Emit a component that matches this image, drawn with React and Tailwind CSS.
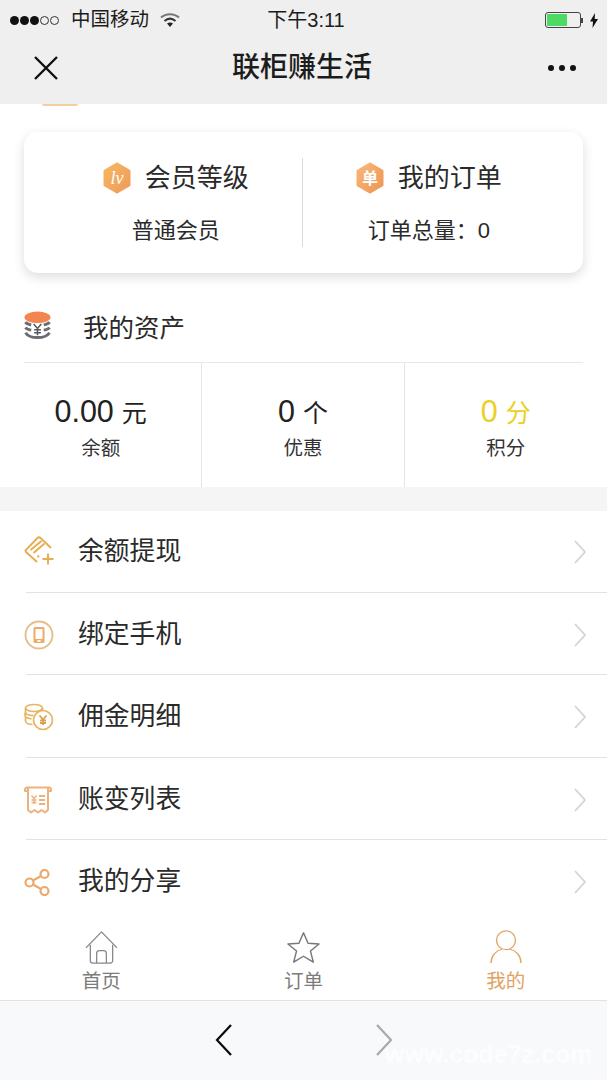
import React from "react";

const FONT = "font-['Liberation_Sans','Noto_Sans_CJK_SC',sans-serif]";

const HexIcon = ({ id, from, to, label, italic = false }) => (
  <svg width="28" height="32" viewBox="1 0 28 32" className="shrink-0">
    <defs>
      <linearGradient id={id} x1="0" y1="0" x2="1" y2="1">
        <stop offset="0" stopColor={from} />
        <stop offset="1" stopColor={to} />
      </linearGradient>
    </defs>
    <polygon
      points="15,2 27,9 27,23 15,30 3,23 3,9"
      fill={`url(#${id})`}
      stroke={`url(#${id})`}
      strokeWidth="3"
      strokeLinejoin="round"
    />
    <text
      x="15"
      y={italic ? 22 : 21.5}
      textAnchor="middle"
      fontSize={italic ? 18 : 16}
      fontStyle={italic ? "italic" : "normal"}
      fontWeight={italic ? "normal" : "bold"}
      fontFamily="'Liberation Serif','Noto Sans CJK SC',serif"
      fill="#fff"
    >
      {label}
    </text>
  </svg>
);

const CoinsIcon = () => (
  <svg width="27" height="29" viewBox="0 0 28 30" className="shrink-0">
    <g fill="none" stroke="#6a6d72" strokeWidth="3">
      <path d="M1.500 11.500c1 1.500 3 2.300 6 2.800" />
      <path d="M26.500 11.500c-1 1.500-3 2.300-6 2.800" />
      <path d="M1.500 17c1 1.500 3 2.300 6 2.800" />
      <path d="M26.500 17c-1 1.500-3 2.300-6 2.800" />
      <path d="M1.500 22.500c2 3 7 5 12.500 5s10.500-2 12.500-5" />
    </g>
    <ellipse cx="14" cy="6.500" rx="13.500" ry="6" fill="#f28550" />
    <path
      d="M10 13.500l4 4.500 4-4.500M14 18v7M10.500 19.500h7M10.500 22.500h7"
      fill="none"
      stroke="#55585c"
      strokeWidth="1.600"
    />
  </svg>
);

const CardPlusIcon = () => (
  <svg width="32" height="32" viewBox="0 0 32 32" fill="none" stroke="#e9ab4f" strokeWidth="1.900" strokeLinejoin="round">
    <path d="M13 26L2 16a1.500 1.500 0 0 1 0-2.200L13.500 2a2 2 0 0 1 3 0L27 12" />
    <path d="M6.500 14L17.500 5M9.500 17l11-9.500" />
    <path d="M13.500 19.500l1.500 1.500" />
    <path d="M24 17.500v11M18.500 23h11" />
  </svg>
);

const PhoneIcon = () => (
  <svg width="30" height="30" viewBox="0 0 30 30" fill="none">
    <circle cx="15" cy="15" r="13.500" stroke="#e8bc84" strokeWidth="1.800" />
    <rect x="9.500" y="7" width="11" height="16" rx="1.500" fill="#eeaa66" />
    <rect x="11.500" y="9" width="7" height="10" fill="#fff" />
    <rect x="13.500" y="20" width="3" height="2" fill="#fff" />
  </svg>
);

const CommissionIcon = () => (
  <svg width="30" height="28" viewBox="0 0 30 28" fill="none" stroke="#e9b45f" strokeWidth="1.700">
    <ellipse cx="10" cy="5" rx="8.500" ry="3.500" />
    <path d="M1.500 5v4c0 2 3 3.500 8 3.500M1.500 9.500c-1 1.500-.500 3 0 4 1 1.500 3 2 6 2.500M1.500 14v4c0 2 3 3.500 7 3.500" />
    <path d="M18.500 5v3" />
    <circle cx="19" cy="17" r="9.500" />
    <path d="M15.500 12.500l3.500 4 3.500-4M19 16.500V22M16 17.500h6M16 20h6" strokeWidth="1.800" stroke="#d9a24c" />
  </svg>
);

const BillIcon = () => (
  <svg width="28" height="28" viewBox="0 0 28 28" fill="none" stroke="#eeb17c" strokeWidth="2" strokeLinejoin="round">
    <path d="M3 1.500h22a2 2 0 0 1 2 2V5h-3" />
    <path d="M3 1.500a2 2 0 0 0-2 2V5h3" />
    <path d="M4 1.500V24l3 2.500 3.500-2.500 3.500 2.500 3.500-2.500 3.500 2.500 3-2.500V1.500" />
    <path d="M7.500 9.500L10 12.500l2.500-3M10 12.500V18M7.500 14h5M7.500 16.500h5" strokeWidth="1.400" />
    <path d="M15 10h6M15 14h6M15 18h6" />
  </svg>
);

const ShareIcon = () => (
  <svg width="26" height="27" viewBox="0 0 26 27" fill="none" stroke="#eba96c" strokeWidth="2.200">
    <circle cx="5.500" cy="13.500" r="4" />
    <circle cx="20.500" cy="5" r="4" />
    <circle cx="20.500" cy="22" r="4" />
    <path d="M9 11.500l8-4.500M9 15.500l8 4.500" />
  </svg>
);

const HomeIcon = () => (
  <svg width="33" height="33" viewBox="0 0 34 36" preserveAspectRatio="none" fill="none" stroke="#85878a" strokeWidth="1.300" strokeLinejoin="round">
    <path d="M1 18.500L17 1l16 17.500" />
    <path d="M5.500 15v17.500a2.500 2.500 0 0 0 2.500 2.500h18a2.500 2.500 0 0 0 2.500-2.500V15" />
    <path d="M12 35V24.500a3 3 0 0 1 3-3h4a3 3 0 0 1 3 3V35" />
  </svg>
);

const StarIcon = () => (
  <svg width="33" height="33" viewBox="0 0 34 36" preserveAspectRatio="none" fill="none" stroke="#76787b" strokeWidth="1.500" strokeLinejoin="round">
    <path d="M17 2l4.700 11.300L33 14.200l-8.800 7.700 2.900 12.100L17 27.500 6.900 34l2.900-12.100L1 14.200l11.300-.9z" />
  </svg>
);

const UserIcon = () => (
  <svg width="32" height="34" viewBox="0 0 32 38" preserveAspectRatio="none" fill="none" stroke="#e3a567" strokeWidth="1.400">
    <ellipse cx="16" cy="11.500" rx="9.500" ry="10.500" />
    <path d="M1 37c0-8 5-14 11-15.500M31 37c0-8-5-14-11-15.500" />
  </svg>
);

const RowChevron = () => (
  <svg width="14" height="24" viewBox="0 0 14 24" fill="none" stroke="#d4d4d4" strokeWidth="1.800" className="shrink-0">
    <path d="M2 1l10 11L2 23" />
  </svg>
);

const menuItems = [
  { label: "余额提现", icon: <CardPlusIcon /> },
  { label: "绑定手机", icon: <PhoneIcon /> },
  { label: "佣金明细", icon: <CommissionIcon /> },
  { label: "账变列表", icon: <BillIcon /> },
  { label: "我的分享", icon: <ShareIcon /> },
];

const StatusBar = () => (
  <div className="flex h-[40px] items-center justify-between pl-[10px] pr-[9px] text-[#1c1c1c]">
    <div className="flex w-[200px] items-center">
      <div className="flex items-center gap-[1px]">
        {[0, 1, 2].map((i) => (
          <span key={i} className="h-[9px] w-[9px] rounded-full bg-[#111]" />
        ))}
        {[3, 4].map((i) => (
          <span key={i} className="h-[9px] w-[9px] rounded-full border border-[#333]" />
        ))}
      </div>
      <span className="ml-[12px] text-[19.500px] leading-none">中国移动</span>
      <svg width="20" height="16" viewBox="0 0 20 16" className="ml-[11px]">
        <path d="M1 5.500C6 1 14 1 19 5.500" fill="none" stroke="#777" strokeWidth="2" />
        <path d="M4.500 9C8 6 12 6 15.500 9" fill="none" stroke="#333" strokeWidth="2" />
        <path d="M7 11.500c2-1.300 4-1.300 6 0L10 15z" fill="#222" />
      </svg>
    </div>
    <span className="ml-[4px] text-[20px] leading-none">下午3:11</span>
    <div className="flex w-[200px] items-center justify-end gap-[7px]">
      <div className="flex items-center">
        <div className="h-[16px] w-[36px] rounded-[3px] border border-[#444] p-[1px]">
          <div className="h-full w-[20px] rounded-[1px] bg-[#4cd964]" />
        </div>
        <span className="h-[5px] w-[2px] bg-[#444]" />
      </div>
      <svg width="8" height="15" viewBox="0 0 8 15">
        <path d="M5 0L0 8.500h3L2.500 15 8 6H4.700z" fill="#111" />
      </svg>
    </div>
  </div>
);

const NavBar = () => (
  <div className="flex h-[64px] items-center justify-between pb-[8px] pl-[33px] pr-[31px]">
    <svg width="26" height="26" viewBox="0 0 26 26" stroke="#111" strokeWidth="2.400">
      <path d="M2 2l22 22M24 2L2 24" />
    </svg>
    <span className="ml-[-3px] text-[28px] font-medium leading-none text-[#1c1c1c]">联柜赚生活</span>
    <div className="flex gap-[5px]">
      <span className="h-[6px] w-[6px] rounded-full bg-[#111]" />
      <span className="h-[6px] w-[6px] rounded-full bg-[#111]" />
      <span className="h-[6px] w-[6px] rounded-full bg-[#111]" />
    </div>
  </div>
);

const SummaryCard = () => (
  <div className="mx-[24px] mt-[28px] h-[141px] rounded-[14px] bg-white py-[26px] pl-[24px] pr-[28px] shadow-[0_4px_12px_rgba(0,0,0,0.14)]">
    <div className="grid h-full grid-cols-2">
      <div className="flex flex-col items-center pl-[2px]">
        <div className="flex h-[40px] items-center gap-[14px] text-[26px] leading-none text-[#2a2a2a]">
          <HexIcon id="hexLv" from="#f5b85f" to="#ef9a5d" label="lv" italic />
          会员等级
        </div>
        <div className="mt-[18px] text-[22px] leading-[30px] text-[#2a2a2a]">普通会员</div>
      </div>
      <div className="flex flex-col items-center border-l border-[#dcdcdc]">
        <div className="flex h-[40px] items-center gap-[14px] text-[26px] leading-none text-[#2a2a2a]">
          <HexIcon id="hexOrder" from="#f8b878" to="#ef9455" label="单" />
          我的订单
        </div>
        <div className="mt-[18px] text-[22px] leading-[30px] text-[#2a2a2a]">订单总量：0</div>
      </div>
    </div>
  </div>
);

const Stat = ({ value, unit, label, accent = false, last = false }) => (
  <div className={`flex flex-col items-center pt-[30px] ${last ? "" : "border-r border-[#e4e4e4]"}`}>
    <div className={`flex items-baseline gap-[8px] leading-[36px] ${accent ? "text-[#ecd021]" : "text-[#222]"}`}>
      <span className="text-[30.500px]">{value}</span>
      <span className="text-[25px]">{unit}</span>
    </div>
    <div className="mt-[3px] text-[19.500px] leading-[28px] text-[#333]">{label}</div>
  </div>
);

const Assets = () => (
  <div className="mt-[27px]">
    <div className="mx-[24px] flex h-[63px] items-start border-b border-[#e8e8e8] pt-[11px]">
      <CoinsIcon />
      <span className="ml-[32px] text-[25.500px] leading-[34px] text-[#2a2a2a]">我的资产</span>
    </div>
    <div className="grid h-[124px] grid-cols-3">
      <Stat value="0.00" unit="元" label="余额" />
      <Stat value="0" unit="个" label="优惠" />
      <Stat value="0" unit="分" label="积分" accent last />
    </div>
  </div>
);

const MenuRow = ({ label, icon, last }) => (
  <div className={`relative flex h-[82.500px] items-center pl-[24px] pr-[20px] ${last ? "" : "after:absolute after:bottom-[1px] after:left-[26px] after:right-0 after:h-[1px] after:bg-[#e2e2e2]"}`}>
    <div className="flex w-[54px] shrink-0 items-center">{icon}</div>
    <span className="flex-1 text-[25.800px] leading-none text-[#2a2a2a]">{label}</span>
    <RowChevron />
  </div>
);

const TabItem = ({ icon, label, active = false }) => (
  <div className="flex flex-col items-center">
    <div className="flex h-[38px] items-end">{icon}</div>
    <span className={`mt-[3px] text-[19.500px] leading-[28px] ${active ? "text-[#dfa263]" : "text-[#7c7c7c]"}`}>{label}</span>
  </div>
);

const TabBar = () => (
  <div className="grid h-[85px] grid-cols-3 bg-white pt-[11px]">
    <TabItem icon={<HomeIcon />} label="首页" />
    <TabItem icon={<StarIcon />} label="订单" />
    <TabItem icon={<UserIcon />} label="我的" active />
  </div>
);

const BrowserBar = () => (
  <div className="relative flex flex-1 justify-center gap-[134px] border-t border-[#e2e2e2] bg-[#f8f9fb] pt-[22px]">
    <svg width="26" height="34" viewBox="0 0 26 34" fill="none" stroke="#0a0a0a" strokeWidth="2.200">
      <path d="M20 2L6 17l14 15" />
    </svg>
    <svg width="26" height="34" viewBox="0 0 26 34" fill="none" stroke="#a9a9a9" strokeWidth="2.200">
      <path d="M6 2l14 15L6 32" />
    </svg>
    <span className="absolute left-[385px] top-[41px] text-[25px] font-bold leading-none text-white/70">
      www.code7z.com
    </span>
  </div>
);

export default function App() {
  return (
    <div className={`flex h-[1080px] w-[607px] flex-col overflow-hidden bg-white ${FONT}`}>
      <div className="bg-[#efefef]">
        <StatusBar />
        <NavBar />
      </div>
      <div className="relative">
        <div className="absolute left-[42px] top-0 h-[2px] w-[36px] rounded-b-full bg-[#f1cf9e]" />
        <SummaryCard />
        <Assets />
        <div className="h-[24px] bg-[#f5f5f5]" />
        {menuItems.map((item, i) => (
          <MenuRow key={item.label} {...item} last={i === menuItems.length - 1} />
        ))}
      </div>
      <div className="-mt-[8.500px]">
        <TabBar />
      </div>
      <BrowserBar />
    </div>
  );
}
